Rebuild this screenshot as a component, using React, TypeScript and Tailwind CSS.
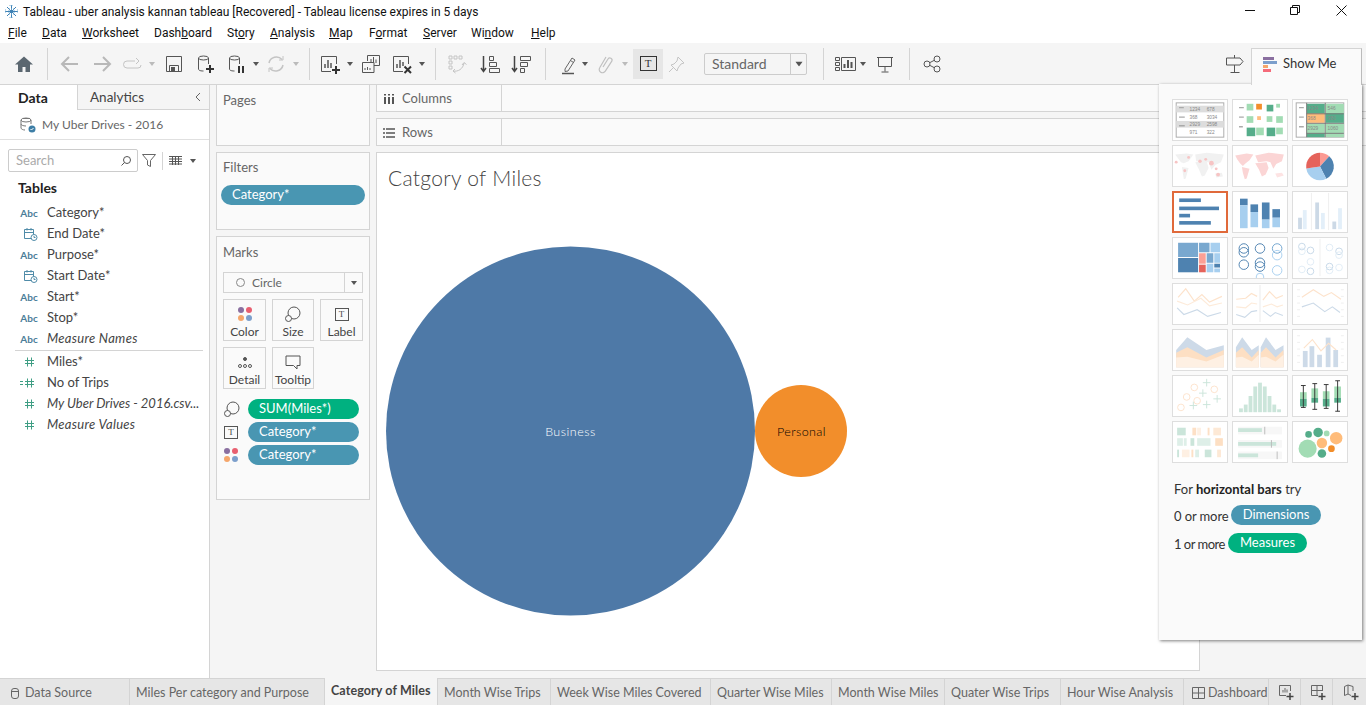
import type { ReactNode } from "react";

const lato = "font-['Lato','Liberation_Sans',sans-serif]";

function Sep() {
  return <div className="w-px h-[32px] bg-[#d4d4d4] shrink-0" />;
}

function Caret({ className = "", dim = false }: { className?: string; dim?: boolean }) {
  return (
    <svg width="6" height="4" viewBox="0 0 6 4" className={`shrink-0 ${className}`}>
      <path d="M0 0h6L3 4z" fill={dim ? "#bbbbbb" : "#555555"} />
    </svg>
  );
}

function Ico({ className = "", children }: { className?: string; children: ReactNode }) {
  return (
    <svg width="24" height="24" viewBox="0 0 24 24" fill="none" stroke="#555555" strokeWidth="1" className={`shrink-0 ${className}`}>
      {children}
    </svg>
  );
}

function Toolbar() {
  return (
    <div className="h-[42px] shrink-0 flex items-center pl-[12px] bg-[#f5f5f5] border-b border-[#d4d4d4]">
      <Ico>
        <path d="M12 4.500 3 12.500h3V20h4.500v-5h3v5H18v-7.500h3z" fill="#5b6770" stroke="none" />
      </Ico>
      <div className="ml-[11px]"><Sep /></div>
      <Ico className="ml-[10px]">
        <path d="M20 12H5M11 5l-7 7 7 7" stroke="#b8b8b8" strokeWidth="2" />
      </Ico>
      <Ico className="ml-[8px]">
        <path d="M4 12h15M13 5l7 7-7 7" stroke="#b8b8b8" strokeWidth="2" />
      </Ico>
      <Ico className="ml-[6px]">
        <path d="M15 9H7a3.500 3.500 0 0 0 0 7h11a3 3 0 0 0 3-3M16 6l3 3-3 3" stroke="#c4c4c4" />
      </Ico>
      <Caret dim className="ml-[5px]" />
      <Ico className="ml-[7px]">
        <path d="M4.500 4.500h15v15h-15zM7.500 19v-5.500h9V19" />
        <rect x="9" y="15" width="4" height="4" fill="#555555" stroke="none" />
      </Ico>
      <Ico className="ml-[7px]">
        <ellipse cx="10.500" cy="6" rx="5" ry="2" />
        <path d="M5.500 6v11c0 1 1 2 5 2M15.500 6v6" />
        <path d="M17 13v8M13 17h8" stroke="#333333" strokeWidth="2" />
      </Ico>
      <Ico className="ml-[7px]">
        <ellipse cx="10.500" cy="6" rx="5" ry="2" />
        <path d="M5.500 6v11c0 1 1 2 5 2M15.500 6v6" />
        <path d="M15 14v7M19 14v7" stroke="#333333" strokeWidth="2" />
      </Ico>
      <Caret className="ml-[5px]" />
      <Ico className="ml-[5px]">
        <path d="M5 11a7.500 7.500 0 0 1 13-3.500M19 13a7.500 7.500 0 0 1-13 3.500" stroke="#c4c4c4" strokeWidth="1.500" />
        <path d="M19 4v4h-4M5 20v-4h4" stroke="#c4c4c4" />
      </Ico>
      <Caret dim className="ml-[5px]" />
      <div className="ml-[10px]"><Sep /></div>
      <Ico className="ml-[8px]">
        <path d="M13 19.500H3.500v-15h15V12" />
        <path d="M7 16v-4M10 16V8M13 16v-5" stroke="#555555" strokeWidth="1.500" />
        <path d="M18 14v8M14 18h8" stroke="#333333" strokeWidth="2" />
      </Ico>
      <Caret className="ml-[5px]" />
      <Ico className="ml-[6px]">
        <path d="M8.500 9V3.500h12v10H15M3.500 10.500h11.500v10H3.500z" fill="#f5f5f5" />
        <path d="M12 11V7M14.500 11V5M17 11V7.500M6 18v-2M8.500 18v-3M11 18v-2" />
      </Ico>
      <Ico className="ml-[7px]">
        <path d="M13 19.500H3.500v-15h15V12" />
        <path d="M7 16v-4M10 16V8M13 14v-4" stroke="#555555" strokeWidth="1.500" />
        <path d="m14.500 14.500 6.500 6.500M21 14.500 14.500 21" stroke="#333333" strokeWidth="2" />
      </Ico>
      <Caret className="ml-[5px]" />
      <div className="ml-[10px]"><Sep /></div>
      <Ico className="ml-[9px]">
        <path d="M4 4h3v3H4zM9 4h3v3H9zM14 4h3v3h-3zM4 9h3v3H4zM4 14h3v3H4zM8 19c5 1 10-2 11-8M17 13l2-2.500 2.500 2M10 17l-2 2 2.500 2" stroke="#c4c4c4" />
      </Ico>
      <Ico className="ml-[9px]">
        <path d="M5.500 4v15M3 16l2.500 3.500L8 16" strokeWidth="1.500" stroke="#444444" />
        <path d="M11.500 4.500h4v4h-4zM11.500 10.500h7v4h-7zM11.500 16.500h10v4h-10z" />
      </Ico>
      <Ico className="ml-[7px]">
        <path d="M5.500 4v15M3 16l2.500 3.500L8 16" strokeWidth="1.500" stroke="#444444" />
        <path d="M11.500 4.500h10v4h-10zM11.500 10.500h7v4h-7zM11.500 16.500h4v4h-4z" />
      </Ico>
      <div className="ml-[12px]"><Sep /></div>
      <Ico className="ml-[10px]">
        <path d="m9 17 7-11 3 2-7 11-3 .500zM14.500 8.500l3 2" stroke="#666666" />
        <path d="M6 21.500h12" stroke="#555555" strokeWidth="1.500" />
      </Ico>
      <Caret className="ml-[2px]" />
      <Ico className="ml-[5px]">
        <path d="m10 15 5-8a2.200 2.200 0 0 1 3.800 2.200l-6.500 10a3.300 3.300 0 0 1-5.600-3.500L13 5" stroke="#c0c0c0" strokeWidth="1.200" />
      </Ico>
      <Caret dim className="ml-[5px]" />
      <div className="ml-[5px] w-[30px] h-[30px] bg-[#e6e6e6] flex items-center justify-center shrink-0">
        <div className="w-[17px] h-[15px] border border-[#333333] flex items-center justify-center text-[11px] leading-none text-[#333333] font-['Liberation_Serif',serif]">T</div>
      </div>
      <Ico className="ml-[2px]">
        <path d="m13 5 6 6-3 1-3 4-1 3-6-6 3-1 3-3zM8 16l-4 4" stroke="#c4c4c4" />
      </Ico>
      <div className={`ml-[15px] w-[103px] h-[22px] border border-[#cccccc] rounded-[2px] flex items-center text-[14px] text-[#666666] shrink-0 ${lato}`}>
        <span className="w-[85px] pl-[7px]">Standard</span>
        <div className="flex-1 h-full border-l border-[#cccccc] flex items-center justify-center">
          <Caret className="scale-125" />
        </div>
      </div>
      <div className="ml-[16px]"><Sep /></div>
      <Ico className="ml-[9px]">
        <path d="M2.500 5.500h4v3h-4zM2.500 10.500h4v3h-4zM2.500 15.500h4v3h-4zM8.500 5.500h14v13h-14z" stroke="#555555" />
        <path d="M11.500 16v-4M15 16V8M18.500 16v-6" strokeWidth="2" />
      </Ico>
      <Caret className="ml-[3px]" />
      <Ico className="ml-[7px]">
        <path d="M4 5.500h16M5.500 5.500v9h13v-9M12 14.500v5M8.500 20h7" />
      </Ico>
      <div className="ml-[12px]"><Sep /></div>
      <Ico className="ml-[10px]">
        <circle cx="7" cy="12" r="3" />
        <circle cx="17" cy="7" r="3" />
        <circle cx="17" cy="17" r="3" />
        <path d="m9.700 10.700 4.600-2.400M9.700 13.300l4.600 2.400" />
      </Ico>
      <Ico className="ml-[279px]">
        <path d="M11.500 3v3M11.500 13v7.500M7.500 20.500h9M3.500 6H17l3 3.500-3 3.500H3.500z" />
      </Ico>
    </div>
  );
}

function FieldIcon({ type }: { type: "abc" | "date" | "num" | "calc" }) {
  if (type === "abc") {
    return <span className="text-[10px] font-bold text-[#4b7d99] w-[24px] text-center leading-none">Abc</span>;
  }
  if (type === "date") {
    return (
      <svg width="24" height="14" viewBox="0 0 24 14" fill="none" stroke="#4f8ba8" className="shrink-0">
        <path d="M14.500 11.500h-7v-9h9v5M7.500 5.500h9M10 1v2.500M14 1v2.500" />
        <circle cx="17" cy="10.500" r="3" />
        <path d="M17 9v1.500h1.500" />
      </svg>
    );
  }
  return (
    <svg width="24" height="14" viewBox="0 0 24 14" fill="none" stroke="#3f9e84" className="shrink-0">
      <path d="M10.500 2.500v9M14.500 2.500v9M8 5.500h9M8 8.500h9" />
      {type === "calc" && <path d="M3 5.500h3M3 8.500h3" />}
    </svg>
  );
}

const fields: { name: string; type: "abc" | "date" | "num" | "calc"; style?: string; divider?: boolean }[] = [
  { name: "Category*", type: "abc" },
  { name: "End Date*", type: "date" },
  { name: "Purpose*", type: "abc" },
  { name: "Start Date*", type: "date" },
  { name: "Start*", type: "abc" },
  { name: "Stop*", type: "abc" },
  { name: "Measure Names", type: "abc", style: "italic tracking-[0.3px]", divider: true },
  { name: "Miles*", type: "num" },
  { name: "No of Trips", type: "calc" },
  { name: "My Uber Drives - 2016.csv...", type: "num", style: "italic" },
  { name: "Measure Values", type: "num", style: "italic tracking-[0.3px]" },
];

function LeftPanel() {
  return (
    <div className={`w-[210px] shrink-0 bg-white border-r border-[#d4d4d4] flex flex-col ${lato}`}>
      <div className="h-[25px] flex shrink-0">
        <div className="w-[77px] text-[14px] font-bold text-[#222222] pl-[18px] leading-[25px]">Data</div>
        <div className="flex-1 bg-[#f5f5f5] border-l border-b border-[#d4d4d4] flex items-center justify-between pl-[12px] pr-[7px] text-[13.500px] text-[#444444]">
          <span>Analytics</span>
          <svg width="8" height="10" viewBox="0 0 8 10" fill="none" stroke="#666666">
            <path d="M6 1 2 5l4 4" />
          </svg>
        </div>
      </div>
      <div className="h-[30px] border-b border-[#e0e0e0] flex items-center pl-[19px] shrink-0 text-[12px] text-[#666666]">
        <svg width="18" height="16" viewBox="0 0 18 16" fill="none" stroke="#777777" className="mr-[5px]">
          <ellipse cx="7" cy="3" rx="5" ry="2" />
          <path d="M2 3v8c0 1 2 2 4 2M12 3v4M4 1.500h7M2 7c0 1 2 2 5 2" />
          <circle cx="13" cy="12" r="3.500" fill="#3d7ea6" stroke="none" />
          <path d="m11.500 12 1 1 2-2" stroke="#ffffff" />
        </svg>
        My Uber Drives - 2016
      </div>
      <div className="flex items-center pl-[8px] mt-[9px] shrink-0">
        <div className="w-[130px] h-[23px] border border-[#cccccc] rounded-[2px] flex items-center justify-between pl-[7px] pr-[5px] text-[13px] text-[#aaaaaa]">
          Search
          <svg width="12" height="12" viewBox="0 0 12 12" fill="none" stroke="#555555">
            <circle cx="7" cy="5" r="3.500" />
            <path d="M4.500 7.500 1.500 10.500" />
          </svg>
        </div>
        <svg width="14" height="13" viewBox="0 0 14 13" fill="none" stroke="#666666" className="ml-[4px]">
          <path d="M.5.500h13l-5 6v6l-3-1.500V6.500z" />
        </svg>
        <div className="w-px h-[18px] bg-[#d4d4d4] ml-[6px]" />
        <svg width="13" height="9" viewBox="0 0 13 9" fill="none" stroke="#555555" className="ml-[6px]">
          <path d="M0 .500h13M0 3h13M0 5.500h13M0 8h13M3.500 0v9M6.500 0v9M9.500 0v9" />
        </svg>
        <Caret className="ml-[8px]" />
      </div>
      <div className="text-[14px] font-bold text-[#222222] pl-[18px] mt-[6px] h-[20px] leading-[20px]">Tables</div>
      <div className="mt-[4px] pl-[17px] flex flex-col">
        {fields.map((f) => (
          <div key={f.name}>
            <div className="h-[21px] flex items-center">
              <FieldIcon type={f.type} />
              <span className={`ml-[6px] text-[13px] text-[#444444] whitespace-nowrap ${f.style ?? ""}`}>{f.name}</span>
            </div>
            {f.divider && <div className="h-px bg-[#d4d4d4] mt-[1px] mr-[6px] ml-[-2px]" />}
          </div>
        ))}
      </div>
    </div>
  );
}

function Pill({ text, green, className = "" }: { text: string; green?: boolean; className?: string }) {
  return (
    <div className={`h-[20px] rounded-full text-[13px] leading-[19px] text-white whitespace-nowrap ${green ? "bg-[#00b180]" : "bg-[#4996b2]"} ${className}`}>
      {text}
    </div>
  );
}

function Dots() {
  return (
    <svg width="16" height="16" viewBox="0 0 16 16">
      <circle cx="4" cy="4" r="3" fill="#8a6fa0" />
      <circle cx="12" cy="4" r="3" fill="#e85f70" />
      <circle cx="4" cy="12" r="3" fill="#f5a66b" />
      <circle cx="12" cy="12" r="3" fill="#7c9fcc" />
    </svg>
  );
}

function SizeGlyph() {
  return (
    <svg width="16" height="16" viewBox="0 0 16 16" fill="none" stroke="#555555">
      <circle cx="9" cy="7" r="6" />
      <circle cx="3.500" cy="12.500" r="3" fill="#fafafa" />
    </svg>
  );
}

function LabelGlyph() {
  return (
    <div className="w-[14px] h-[13px] border border-[#555555] flex items-center justify-center text-[9px] leading-none text-[#444444] font-['Liberation_Serif',serif]">T</div>
  );
}

function MarkBtn({ label, children }: { label: string; children: ReactNode }) {
  return (
    <div className="w-full h-[42px] border border-[#d4d4d4] flex flex-col items-center pt-[5px] text-[12px] text-[#444444]">
      <div className="h-[18px] flex items-center">{children}</div>
      <div className="leading-[15px] mt-[1px]">{label}</div>
    </div>
  );
}

function Card({ title, className = "", children }: { title: string; className?: string; children?: ReactNode }) {
  return (
    <div className={`border border-[#d4d4d4] bg-[#fafafa] shrink-0 px-[6px] ${className}`}>
      <div className="text-[13px] text-[#666666] h-[18px] leading-[18px]">{title}</div>
      {children}
    </div>
  );
}

function CardsColumn() {
  return (
    <div className={`w-[154px] ml-[6px] shrink-0 flex flex-col gap-[6px] ${lato}`}>
      <Card title="Pages" className="h-[61px] border-t-0 pt-[6px]" />
      <Card title="Filters" className="h-[78px] pt-[5px]">
        <Pill text="Category*" className="pl-[11px] mt-[9px] mr-[-2px] ml-[-2px]" />
      </Card>
      <Card title="Marks" className="h-[264px] pt-[6px]">
        <div className="mt-[11px] h-[21px] w-[140px] border border-[#d4d4d4] flex items-center text-[12px] text-[#666666]">
          <div className="flex-1 flex items-center pl-[12px] gap-[7px]">
            <span className="w-[9px] h-[9px] rounded-full border border-[#888888]" />
            Circle
          </div>
          <div className="w-[18px] h-full border-l border-[#d4d4d4] flex items-center justify-center">
            <Caret />
          </div>
        </div>
        <div className="grid grid-cols-[43px_42px_43px] gap-x-[6px] gap-y-[6px] mt-[6px] w-[140px]">
          <MarkBtn label="Color"><Dots /></MarkBtn>
          <MarkBtn label="Size"><SizeGlyph /></MarkBtn>
          <MarkBtn label="Label"><LabelGlyph /></MarkBtn>
          <MarkBtn label="Detail">
            <svg width="16" height="14" viewBox="0 0 16 14" fill="none" stroke="#555555">
              <circle cx="8" cy="4" r="1.500" fill="#555555" />
              <circle cx="3" cy="11" r="1.500" />
              <circle cx="8" cy="11" r="1.500" />
              <circle cx="13" cy="11" r="1.500" />
            </svg>
          </MarkBtn>
          <MarkBtn label="Tooltip">
            <svg width="16" height="16" viewBox="0 0 16 16" fill="none" stroke="#555555">
              <path d="M1 2h14v9.500h-3V15l-3.500-3.500H1z" />
            </svg>
          </MarkBtn>
        </div>
        <div className="mt-[10px] flex flex-col gap-[3px]">
          <div className="flex items-center h-[20px]">
            <div className="w-[25px] pl-[1px] flex"><SizeGlyph /></div>
            <Pill text="SUM(Miles*)" green className="w-[111px] pl-[11px]" />
          </div>
          <div className="flex items-center h-[20px]">
            <div className="w-[25px] pl-[1px] flex"><LabelGlyph /></div>
            <Pill text="Category*" className="w-[111px] pl-[11px]" />
          </div>
          <div className="flex items-center h-[20px]">
            <div className="w-[25px] flex"><Dots /></div>
            <Pill text="Category*" className="w-[111px] pl-[11px]" />
          </div>
        </div>
      </Card>
    </div>
  );
}

function Shelf({ label, icon, className = "" }: { label: string; icon: ReactNode; className?: string }) {
  return (
    <div className={`border border-[#d4d4d4] border-r-0 bg-[#fafafa] flex shrink-0 ${className}`}>
      <div className="w-[125px] border-r border-[#d4d4d4] flex items-center pl-[6px] pt-[1px] gap-[7px] text-[13px] text-[#666666]">
        {icon}
        {label}
      </div>
    </div>
  );
}

function Viz() {
  return (
    <div className="w-[824px] h-[519px] mt-[6px] border border-[#d4d4d4] bg-white flex flex-col shrink-0">
      <div className="text-[21px] font-light leading-[26px] text-[#444444] pl-[11px] pt-[12px] tracking-[0.3px]">Catgory of Miles</div>
      <svg width="822" height="479" viewBox="0 0 822 479" className="block">
        <circle cx="193.500" cy="240" r="184.500" fill="#4e79a7" />
        <circle cx="424" cy="240" r="46" fill="#f28e2b" />
        <text x="193.500" y="245" textAnchor="middle" fontSize="12.500" fontWeight="300" letterSpacing="0.500" fill="#ffffff" fontFamily="Lato, sans-serif">Business</text>
        <text x="424.500" y="245" textAnchor="middle" fontSize="12.500" fontWeight="300" letterSpacing="0.400" fill="#000000" fontFamily="Lato, sans-serif">Personal</text>
      </svg>
    </div>
  );
}

// Show Me thumbnails, drawn on a 56x42 grid
const G1 = "#a2dcb4";
const G2 = "#55ad8a";
const BL = "#4e82b0";
const LB = "#a7cfef";

const smallText = { fontSize: 5, fill: "#888888", fontFamily: "Liberation Sans, sans-serif" };

const thumbs: ReactNode[] = [
  <g key="text">
    <rect x="3" y="3" width="50" height="36" fill="#fff" stroke="#aaaaaa" />
    <rect x="3" y="6" width="50" height="7" fill="#dddddd" />
    <rect x="3" y="22" width="50" height="7" fill="#dddddd" />
    <path d="M6 8h5M6 18h6M6 27h6" stroke="#aaaaaa" strokeWidth="1.500" />
    <text x="17" y="11.500" {...smallText}>1234</text>
    <text x="35" y="11.500" {...smallText}>678</text>
    <text x="17" y="20" {...smallText}>368</text>
    <text x="35" y="20" {...smallText}>3034</text>
    <text x="17" y="27.500" {...smallText}>2929</text>
    <text x="35" y="27.500" {...smallText}>2598</text>
    <text x="17" y="36" {...smallText}>971</text>
    <text x="35" y="36" {...smallText}>322</text>
  </g>,
  <g key="highlight">
    <path d="M6 8h5M6 18h5M6 28h4" stroke="#aaaaaa" strokeWidth="1.500" />
    <rect x="14" y="4" width="7" height="7" fill={G1} />
    <rect x="24" y="4" width="6" height="6" fill="#f28e2b" />
    <rect x="35" y="5" width="7" height="7" fill={G2} />
    <rect x="45" y="4" width="4" height="4" fill={G1} />
    <rect x="14" y="17" width="7" height="7" fill={G1} />
    <rect x="25" y="17" width="4" height="4" fill="#ffbf80" />
    <rect x="35" y="17" width="6" height="6" fill={G1} />
    <rect x="45" y="17" width="7" height="7" fill={G1} />
    <rect x="14" y="29" width="9" height="9" fill={G2} />
    <rect x="24" y="29" width="8" height="8" fill={G1} />
    <rect x="35" y="29" width="9" height="9" fill={G2} />
    <rect x="45" y="29" width="7" height="7" fill={G1} />
  </g>,
  <g key="heat">
    <rect x="3" y="3" width="50" height="36" fill="#fff" stroke="#aaaaaa" />
    <rect x="14" y="4" width="19" height="11" fill={G2} />
    <rect x="34" y="4" width="19" height="11" fill={G1} />
    <rect x="14" y="14" width="19" height="10" fill="#ffbc7a" />
    <rect x="34" y="14" width="19" height="10" fill={G2} />
    <rect x="14" y="25" width="19" height="10" fill={G1} />
    <rect x="34" y="25" width="19" height="10" fill={G1} />
    <rect x="14" y="35" width="19" height="4" fill={G2} />
    <rect x="34" y="35" width="19" height="4" fill={G1} />
    <path d="M14 3v36M33.500 3v36M14 14.500h39M14 24.500h39M14 35h39" stroke="#777777" />
    <path d="M6 8h5M6 18h5M6 28h5" stroke="#aaaaaa" strokeWidth="1.500" />
    <text x="15" y="11" {...smallText}>1234</text>
    <text x="36" y="11" {...smallText}>546</text>
    <text x="15" y="21" {...smallText}>368</text>
    <text x="36" y="21" {...smallText}>380</text>
    <text x="15" y="32" {...smallText}>2929</text>
    <text x="36" y="32" {...smallText}>1060</text>
  </g>,
  <g key="symbolmap">
    <path d="M2 9l12-1 7 1-5 7-5 2-3-1zM9 22l7 1-3 11-2 1zM23 17l12-1 2 7-4 8-3 1-3-7zM23 9l12-2 18 2-3 8-6 3-4 5-3-8-13-1zM44 29l7-1 1 4-7 1z" fill="#f1f1f1" />
    <circle cx="3" cy="17" r="1.500" fill="#f7c4c4" />
    <circle cx="16" cy="12" r="1.500" fill="#f7c4c4" />
    <circle cx="12" cy="26" r="1.500" fill="#f7c4c4" />
    <circle cx="28" cy="16" r="1.800" fill="#f7c4c4" />
    <circle cx="40" cy="18" r="2.500" fill="#f7c4c4" />
    <circle cx="34" cy="14" r="1.500" fill="#f7c4c4" />
    <circle cx="45" cy="24" r="1.500" fill="#f7c4c4" />
    <circle cx="47" cy="30" r="2" fill="#f7c4c4" />
  </g>,
  <g key="filledmap">
    <path d="M2 10l12-2 7 1-4 6-4 3-3 3-3-3-3-4zM9 22l8 2-3 10-2 1-2-7zM23 18l12-1 2 6-3 7-4 2-3-7zM23 10l14-3 16 2-2 7-6 3-3 5-3-7-4-1-9 1z" fill="#fbd5d5" />
    <path d="M44 29l7-1 2 3-7 2z" fill="#fde3e3" />
  </g>,
  <g key="pie">
    <path d="M28 21.500V7a14.500 14.500 0 0 1 9.700 3.700z" fill="#fc9a93" />
    <path d="M28 21.500 37.700 10.700a14.500 14.500 0 0 1-3.100 23.700z" fill="#4e82b0" />
    <path d="M28 21.500 34.600 34.400A14.500 14.500 0 0 1 13.600 23.500z" fill={LB} />
    <path d="M28 21.500 13.600 23.500A14.500 14.500 0 0 1 28 7z" fill="#e5635b" />
  </g>,
  <g key="hbar">
    <rect x="5" y="6" width="24" height="4" fill={BL} />
    <rect x="5" y="15" width="44" height="4" fill={BL} />
    <rect x="5" y="23" width="12" height="4" fill={BL} />
    <rect x="5" y="31" width="35" height="4" fill={BL} />
  </g>,
  <g key="stacked">
    <rect x="7" y="7" width="8" height="7" fill={BL} />
    <rect x="7" y="14" width="8" height="24" fill={LB} />
    <rect x="18" y="13" width="8" height="8" fill={BL} />
    <rect x="18" y="21" width="8" height="16" fill={LB} />
    <rect x="30" y="11" width="8" height="18" fill={BL} />
    <rect x="30" y="29" width="8" height="9" fill={LB} />
    <rect x="41" y="18" width="8" height="9" fill={BL} />
    <rect x="41" y="27" width="8" height="10" fill={LB} />
  </g>,
  <g key="sidebar">
    <path d="M19 1v39M37 1v39" stroke="#eeeeee" />
    <rect x="5" y="27" width="4" height="12" fill="#ccd9e6" />
    <rect x="10" y="19" width="4" height="20" fill="#e3eff9" />
    <rect x="23" y="11" width="4" height="28" fill="#ccd9e6" />
    <rect x="29" y="22" width="4" height="17" fill="#e3eff9" />
    <rect x="41" y="31" width="4" height="8" fill="#ccd9e6" />
    <rect x="47" y="17" width="4" height="22" fill="#e3eff9" />
  </g>,
  <g key="treemap">
    <rect x="5" y="5" width="21" height="15" fill="#79a8cf" />
    <rect x="5" y="21" width="21" height="15" fill={BL} />
    <rect x="27" y="5" width="11" height="10" fill="#79a8cf" />
    <rect x="39" y="5" width="10" height="10" fill={LB} />
    <rect x="27" y="16" width="7" height="11" fill="#fca095" />
    <rect x="27" y="28" width="7" height="8" fill="#e5635b" />
    <rect x="35" y="16" width="7" height="10" fill="#79a8cf" />
    <rect x="43" y="16" width="6" height="10" fill={LB} />
    <rect x="35" y="27" width="7" height="9" fill={LB} />
    <rect x="43" y="27" width="6" height="4" fill={BL} />
    <rect x="43" y="32" width="6" height="4" fill={LB} />
  </g>,
  <g key="circles" fill="none" strokeWidth="1">
    <circle cx="11" cy="11" r="5" stroke={BL} />
    <circle cx="11" cy="15" r="5" stroke={BL} />
    <circle cx="28" cy="11" r="5" stroke={BL} />
    <circle cx="46" cy="11" r="5" stroke="#6fa3cf" />
    <circle cx="46" cy="18" r="5" stroke={LB} />
    <circle cx="11" cy="28" r="5" stroke={BL} />
    <circle cx="28" cy="26" r="5" stroke={BL} />
    <circle cx="28" cy="30" r="5" stroke={BL} />
    <circle cx="28" cy="41" r="4" stroke={LB} />
    <circle cx="46" cy="34" r="5" stroke={LB} />
  </g>,
  <g key="sidecircles" fill="none" strokeWidth="1">
    <path d="M28 1v39" stroke="#eeeeee" />
    <circle cx="9" cy="9" r="3.500" stroke="#c6d8e8" />
    <circle cx="9" cy="14" r="3.500" stroke="#e0ecf6" />
    <circle cx="18" cy="13" r="3.500" stroke="#c6d8e8" />
    <circle cx="18" cy="25" r="3.500" stroke="#e0ecf6" />
    <circle cx="9" cy="33" r="3.500" stroke="#e0ecf6" />
    <circle cx="18" cy="35" r="3.500" stroke="#c6d8e8" />
    <circle cx="38" cy="10" r="3.500" stroke="#e0ecf6" />
    <circle cx="48" cy="14" r="3.500" stroke="#c6d8e8" />
    <circle cx="48" cy="18" r="3.500" stroke="#e0ecf6" />
    <circle cx="38" cy="30" r="3.500" stroke="#c6d8e8" />
    <circle cx="38" cy="34" r="3.500" stroke="#e0ecf6" />
    <circle cx="48" cy="31" r="3.500" stroke="#e0ecf6" />
  </g>,
  <g key="lines" fill="none" strokeWidth="1.200">
    <path d="M5 14 13 5l9 13 8-7 8 8 13-6" stroke="#fde3cc" />
    <path d="M4 18l11 4 14-7 9 8 13-3" stroke="#fdebda" />
    <path d="M4 25l7 7 14-5 11 7 14-4" stroke="#ccdae8" />
  </g>,
  <g key="discretelines" fill="none" strokeWidth="1.200">
    <path d="M28 1v39" stroke="#eeeeee" />
    <path d="M3 16l10-1 6-5 6 3M31 17l7-9 7 7 7-3" stroke="#fde3cc" />
    <path d="M3 24l10 1 6-5 6 1M31 24l9-3 6 3 6-2" stroke="#fdebda" />
    <path d="M3 32l9 3 7-6 6-1M31 28l8 6 5-4 8 3" stroke="#ccdae8" />
  </g>,
  <g key="duallines" fill="none">
    <path d="M4 6h3M4 13h3M4 20h3M4 27h3M4 34h3M50 6h3M50 13h3M50 20h3M50 27h3M50 34h3" stroke="#eeeeee" />
    <path d="M9 14l12-8 11 7 8-4 10 7" stroke="#fde3cc" strokeWidth="1.200" />
    <path d="M9 24l12-4 12 9 8-5 8 6" stroke="#ccdae8" strokeWidth="1.200" />
  </g>,
  <g key="area">
    <path d="M3 21 14.700 7.700 34.700 21 53 16v23H3z" fill="#cddae8" />
    <path d="M3 24 14.700 18 34.700 29 53 21v18H3z" fill="#fddfc3" />
    <path d="M3 29 14.700 28 34.700 33 53 26v13H3z" fill="#fef0e3" />
  </g>,
  <g key="sidearea">
    <path d="M2.700 18 9.300 7.700 19.300 21 26.700 16v23H2.700zM28.700 18 34.300 7.700 44.300 21 52.700 16v23H28.700z" fill="#cddae8" />
    <path d="M2.700 24 9.300 18 19.300 29 26.700 21v18H2.700zM28.700 24 34.300 18 44.300 29 52.700 21v18H28.700z" fill="#fddfc3" />
    <path d="M2.700 29 9.300 28 19.300 33 26.700 26v13H2.700zM28.700 29 34.300 28 44.300 33 52.700 26v13H28.700z" fill="#fef0e3" />
  </g>,
  <g key="barline">
    <path d="M4 6h3M4 13h3M4 20h3M4 27h3M4 34h3M50 6h3M50 13h3M50 20h3M50 27h3M50 34h3" stroke="#eeeeee" />
    <rect x="10" y="22" width="5" height="17" fill="#cddae8" />
    <rect x="17" y="17" width="5" height="22" fill="#cddae8" />
    <rect x="25" y="26" width="5" height="13" fill="#cddae8" />
    <rect x="34" y="8" width="5" height="31" fill="#cddae8" />
    <rect x="42" y="21" width="5" height="18" fill="#cddae8" />
    <path d="M11 19l9-9 9 12 8-8 8 7" stroke="#fde3cc" strokeWidth="1.200" fill="none" />
  </g>,
  <g key="scatter" fill="none">
    <circle cx="22" cy="12" r="3.500" stroke="#fde3cc" />
    <circle cx="43" cy="14" r="3.500" stroke="#fde3cc" />
    <circle cx="14" cy="22" r="3.500" stroke="#fde3cc" />
    <circle cx="25" cy="26" r="3.500" stroke="#fde3cc" />
    <circle cx="8" cy="33" r="3.500" stroke="#fde3cc" />
    <path d="M31 7h8M35 3v8M27 18h8M31 14v8M17 31h8M21 27v8M31 30h8M35 26v8M42 24h8M46 20v8" stroke="#cbe5da" />
  </g>,
  <g key="hist" fill="#cbe5da">
    <rect x="6" y="34" width="4" height="4" />
    <rect x="11" y="30" width="4" height="8" />
    <rect x="16" y="21" width="4" height="17" />
    <rect x="21" y="11" width="4" height="27" />
    <rect x="26" y="7" width="4" height="31" />
    <rect x="31" y="11" width="4" height="27" />
    <rect x="36" y="21" width="4" height="17" />
    <rect x="41" y="30" width="4" height="8" />
    <rect x="46" y="35" width="4" height="3" />
  </g>,
  <g key="box">
    <rect x="7" y="17" width="7" height="7" fill={G1} />
    <rect x="7" y="24" width="7" height="8" fill={G2} />
    <rect x="19" y="13" width="7" height="10" fill={G1} />
    <rect x="19" y="23" width="7" height="5" fill={G2} />
    <rect x="31" y="16" width="7" height="8" fill={G1} />
    <rect x="31" y="24" width="7" height="8" fill={G2} />
    <rect x="43" y="11" width="7" height="12" fill={G1} />
    <rect x="43" y="23" width="7" height="5" fill={G2} />
    <path d="M10.500 10v23M8 10h5M8 33h5M22.500 8v27M20 8h5M20 35h5M34.500 9v25M32 9h5M32 34h5M46.500 5v32M44 5h5M44 37h5" stroke="#333333" fill="none" />
  </g>,
  <g key="gantt">
    <rect x="4" y="6" width="9" height="8" fill="#cbe5da" />
    <rect x="20" y="6" width="4" height="8" fill="#fde0c6" />
    <rect x="25" y="6" width="4" height="8" fill="#fef0e3" />
    <rect x="36" y="6" width="2" height="8" fill="#fde0c6" />
    <rect x="42" y="6" width="8" height="8" fill="#fde9d6" />
    <rect x="4" y="17" width="6" height="8" fill="#deefe8" />
    <rect x="11" y="17" width="3" height="8" fill="#deefe8" />
    <rect x="18" y="17" width="4" height="8" fill="#cbe5da" />
    <rect x="25" y="17" width="14" height="8" fill="#deefe8" />
    <rect x="44" y="17" width="8" height="8" fill="#fddfc3" />
    <rect x="4" y="29" width="2" height="8" fill="#cbe5da" />
    <rect x="9" y="29" width="8" height="8" fill="#fef0e3" />
    <rect x="19" y="29" width="2" height="8" fill="#fde0c6" />
    <rect x="23" y="29" width="4" height="8" fill="#deefe8" />
    <rect x="33" y="29" width="7" height="8" fill="#cbe5da" />
    <rect x="46" y="29" width="4" height="8" fill="#fde9d6" />
  </g>,
  <g key="bullet">
    <rect x="5" y="5" width="46" height="8" fill="#f7f7f7" />
    <rect x="5" y="6.500" width="25" height="4" fill="#cbe5da" />
    <rect x="5" y="19" width="46" height="8" fill="#f7f7f7" />
    <rect x="5" y="21" width="40" height="4" fill="#cbe5da" />
    <rect x="5" y="31" width="46" height="8" fill="#f7f7f7" />
    <rect x="5" y="33" width="21" height="4" fill="#cbe5da" />
    <path d="M33 5v8M40 19v8M46 31v8" stroke="#bbbbbb" />
  </g>,
  <g key="bubbles">
    <circle cx="15" cy="28" r="9.500" fill={G1} />
    <circle cx="16" cy="13" r="3.500" fill={G2} />
    <circle cx="26" cy="11" r="5" fill={G2} />
    <circle cx="35" cy="12" r="3" fill={G1} />
    <circle cx="30" cy="22" r="5.500" fill="#ffbc7a" />
    <circle cx="45" cy="17" r="6.500" fill="#ffbc7a" />
    <circle cx="40" cy="28" r="3.500" fill="#f28e2b" />
    <circle cx="30" cy="33" r="4.500" fill={G2} />
  </g>,
];

function ShowMe() {
  return (
    <>
      <div className="absolute left-[1159px] top-[84px] w-[203px] h-[556px] bg-[#fafafa] shadow-[1px_1px_3px_rgba(0,0,0,0.5)] pl-[13px] pt-[15px]">
        <div className="grid grid-cols-[56px_56px_56px] auto-rows-[42px] gap-[4px]">
          {thumbs.map((t, i) => (
            <svg
              key={i}
              width="56"
              height="42"
              viewBox="0 0 56 42"
              className={`block bg-white border ${i === 6 ? "border-[#e0693a] border-2 box-border" : "border-[#dedede]"}`}
            >
              {t}
            </svg>
          ))}
        </div>
        <div className="mt-[17px] text-[13px] leading-[18px] text-[#333333] pl-[2px]">
          For <b className="text-[#222222]">horizontal bars</b> try
        </div>
        <div className="flex items-center mt-[6px] pl-[2px] text-[13px] text-[#333333]">
          <span className="w-[57px] mt-[3px] tracking-[-0.1px]">0 or more</span>
          <Pill text="Dimensions" className="w-[90px] text-center" />
        </div>
        <div className="flex items-center mt-[5px] pl-[2px] text-[13px] text-[#333333]">
          <span className="w-[54px] mt-[3px] tracking-[-0.5px]">1 or more</span>
          <Pill text="Measures" green className="w-[79px] text-center" />
        </div>
      </div>
      <div className="absolute left-[1251px] top-[48px] w-[111px] h-[37px] bg-[#fafafa] border-t border-l border-r border-t-[#d4d4d4] border-l-[#d4d4d4] border-r-[#bbbbbb] flex items-center pl-[11px] gap-[4px] text-[13px] text-[#333333] pb-[6px]">
        <svg width="16" height="16" viewBox="0 0 16 16">
          <rect x="0" y="1" width="11" height="3" fill="#8a6fa0" />
          <rect x="0" y="5" width="14" height="3" fill="#7c9fcc" />
          <rect x="0" y="9" width="5" height="3" fill="#f5a66b" />
          <rect x="0" y="13" width="8" height="3" fill="#f56b7a" />
        </svg>
        Show Me
      </div>
    </>
  );
}

const sheets: { name: string; w: string; active?: boolean; icon?: "db" | "dash" }[] = [
  { name: "Data Source", w: "w-[130px]", icon: "db" },
  { name: "Miles Per category and Purpose", w: "w-[195px]" },
  { name: "Category of Miles", w: "w-[113px]", active: true },
  { name: "Month Wise Trips", w: "w-[113px]" },
  { name: "Week Wise Miles Covered", w: "w-[160px]" },
  { name: "Quarter Wise Miles", w: "w-[121px]" },
  { name: "Month Wise Miles", w: "w-[113px]" },
  { name: "Quater Wise Trips", w: "w-[116px]" },
  { name: "Hour Wise Analysis", w: "w-[123px]" },
  { name: "Dashboard", w: "w-[85px]", icon: "dash" },
];

function SheetTabs() {
  return (
    <div className={`absolute left-0 top-[678px] w-[1366px] h-[27px] flex bg-[#e6e6e6] border-t border-[#d4d4d4] text-[12.500px] text-[#666666] ${lato}`}>
      {sheets.map((s) => (
        <div
          key={s.name}
          className={`${s.w} shrink-0 border-r border-[#d4d4d4] flex items-center whitespace-nowrap pl-[6px] gap-[5px] ${s.active ? "bg-[#f5f5f5] font-bold text-[#444444] mt-[-1px] tracking-[0.1px]" : "pt-[2px]"}`}
        >
          {s.icon === "db" && (
            <svg width="10" height="13" viewBox="0 0 10 13" fill="none" stroke="#666666" className="ml-[4px] shrink-0">
              <rect x="1.500" y="1.500" width="7" height="10" rx="2.500" />
              <path d="M1.500 4.500h7" />
            </svg>
          )}
          {s.icon === "dash" && (
            <svg width="13" height="12" viewBox="0 0 13 12" fill="none" stroke="#666666" className="ml-[2px] mr-[-2px] shrink-0">
              <path d="M.5.500h12v11H.5zM6.500.500v11M.5 6h12" />
            </svg>
          )}
          {s.name}
        </div>
      ))}
      <div className="w-[32px] border-r border-[#d4d4d4] flex items-center justify-center pl-[2px]">
        <svg width="18" height="18" viewBox="0 0 18 18" fill="none" stroke="#666666">
          <path d="M9 12.500H2.500v-10h11V8M6 9.500V7M8 9.500V5M10 9.500V6.500" />
          <path d="M13 10v7M9.500 13.500h7" stroke="#444444" strokeWidth="1.500" />
        </svg>
      </div>
      <div className="w-[32px] border-r border-[#d4d4d4] flex items-center justify-center pl-[2px]">
        <svg width="18" height="18" viewBox="0 0 18 18" fill="none" stroke="#666666">
          <path d="M9 12.500H2.500v-10h11V8M8 2.500v10M2.500 7.500h11" />
          <path d="M13 10v7M9.500 13.500h7" stroke="#444444" strokeWidth="1.500" />
        </svg>
      </div>
      <div className="w-[33px] flex items-center justify-center pl-[2px]">
        <svg width="18" height="18" viewBox="0 0 18 18" fill="none" stroke="#666666">
          <path d="M9 12.500 6 11l-3.500 1.500v-9L6 2l5 1.500V8M6 2v9" />
          <path d="M13 10v7M9.500 13.500h7" stroke="#444444" strokeWidth="1.500" />
        </svg>
      </div>
    </div>
  );
}

const menus: [string, string, string, string][] = [
  ["", "F", "ile", "w-[34px]"],
  ["", "D", "ata", "w-[40px]"],
  ["", "W", "orksheet", "w-[72px]"],
  ["Dash", "b", "oard", "w-[73px]"],
  ["St", "o", "ry", "w-[43px]"],
  ["", "A", "nalysis", "w-[59px]"],
  ["", "M", "ap", "w-[40px]"],
  ["F", "o", "rmat", "w-[54px]"],
  ["", "S", "erver", "w-[48px]"],
  ["Wi", "n", "dow", "w-[60px]"],
  ["", "H", "elp", "w-[40px]"],
];

export default function App() {
  return (
    <div className="relative w-[1366px] h-[705px] overflow-hidden bg-[#f5f5f5] flex flex-col font-['Lato',sans-serif]">
      <div className="h-[23px] shrink-0 bg-white flex items-center text-[12px] text-[#111111] font-['Roboto',sans-serif]">
        <svg width="15" height="15" viewBox="0 0 15 15" fill="none" className="ml-[4px] mr-[4px]">
          <path d="M7.500 1v13M1 7.500h13M3 3l9 9M12 3l-9 9" stroke="#3f82b5" />
          <path d="M5.500 1.500h4M5.500 13.500h4M1.500 5.500v4M13.500 5.500v4" stroke="#7ab0d6" strokeDasharray="1 1" />
          <path d="M5 5h5v5H5z" stroke="#7ab0d6" strokeDasharray="1 1" />
        </svg>
        <span>Tableau - uber analysis kannan tableau [Recovered] - Tableau license expires in 5 days</span>
        <div className="ml-auto flex items-center pr-[19px] mb-[3px]">
          <div className="w-[10px] h-px bg-[#111111]" />
          <svg width="10" height="10" viewBox="0 0 10 10" fill="none" stroke="#111111" className="ml-[35px]">
            <path d="M.5 2.500h7v7h-7zM2.500 2.500v-2h7v7h-2" />
          </svg>
          <svg width="11" height="11" viewBox="0 0 11 11" fill="none" stroke="#111111" className="ml-[36px]">
            <path d="m.5.500 10 10M10.500.500l-10 10" />
          </svg>
        </div>
      </div>
      <div className="h-[20px] shrink-0 bg-white flex items-center pl-[8px] text-[12px] text-[#111111] font-['Roboto',sans-serif]">
        {menus.map(([a, u, b, w]) => (
          <div key={u + b} className={w}>
            {a}
            <span className="underline">{u}</span>
            {b}
          </div>
        ))}
      </div>
      <Toolbar />
      <div className="flex-1 flex min-h-0">
        <LeftPanel />
        <CardsColumn />
        <div className={`ml-[6px] flex-1 min-w-0 flex flex-col text-[13px] ${lato}`}>
          <Shelf
            label="Columns"
            className="h-[27px] border-t-0"
            icon={
              <svg width="12" height="12" viewBox="0 0 12 12" stroke="#555555" strokeWidth="2" fill="none">
                <path d="M2 1v1.500M2 4v7M6 1v1.500M6 4v7M10 1v1.500M10 4v7" />
              </svg>
            }
          />
          <div className="h-[6px]" />
          <Shelf
            label="Rows"
            className="h-[28px]"
            icon={
              <svg width="12" height="12" viewBox="0 0 12 12" stroke="#555555" fill="none">
                <path d="M0 2h2M0 6h2M0 10h2M3 2h9M3 6h9M3 10h9" strokeWidth="1.500" />
              </svg>
            }
          />
          <Viz />
        </div>
      </div>
      <ShowMe />
      <SheetTabs />
    </div>
  );
}
